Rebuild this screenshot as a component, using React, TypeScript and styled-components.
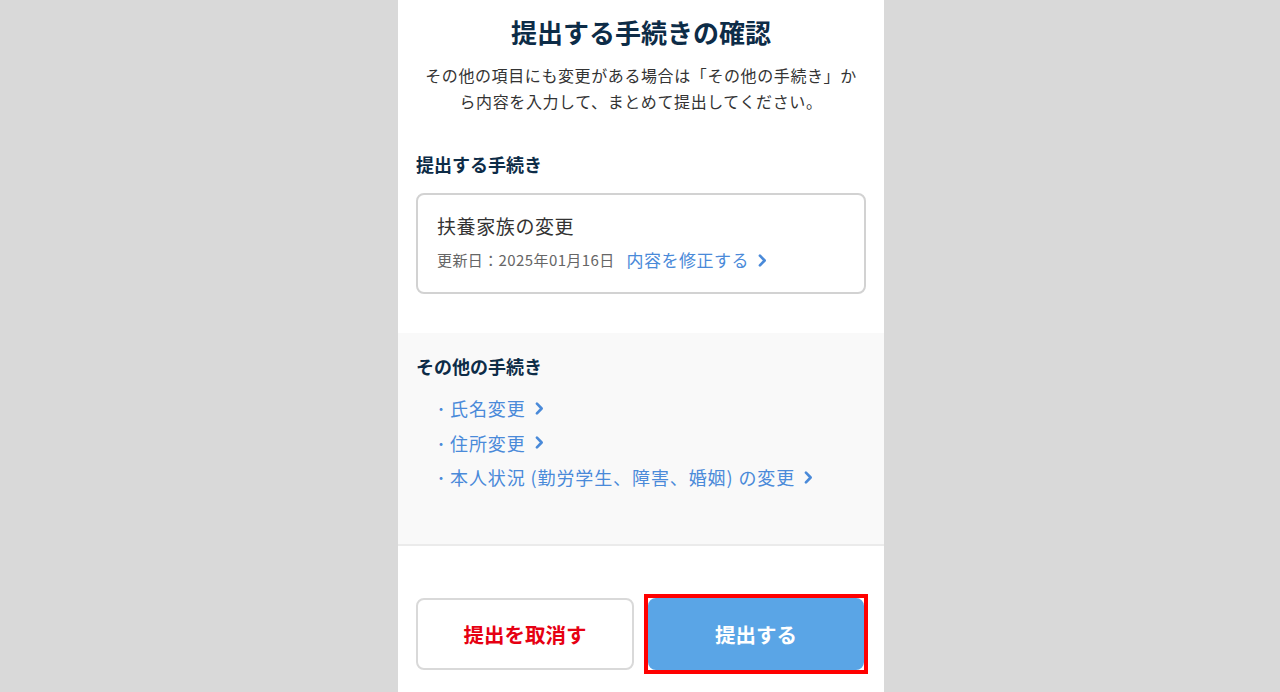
import React from "react";
import styled, { createGlobalStyle } from "styled-components";

const Global = createGlobalStyle`
  html, body { margin: 0; padding: 0; background: #d9d9d9; }
  body { font-family: "Noto Sans CJK JP", "Noto Sans", sans-serif; }
  * { box-sizing: border-box; }
`;

const Panel = styled.div`
  width: 486px;
  margin: 0 0 0 calc(50% - 242px);
  min-height: 100vh;
  background: #fff;
  display: flex;
  flex-direction: column;
`;

const TopSection = styled.section`
  padding: 13px 18px 39px;
  display: flex;
  flex-direction: column;
`;

const Title = styled.h1`
  margin: 0;
  font-size: 26px;
  line-height: 38px;
  font-weight: 700;
  color: #0d2c47;
  text-align: center;
`;

const Lead = styled.p`
  margin: 11px 0 0;
  font-size: 16px;
  line-height: 26px;
  color: #333;
  text-align: center;
  letter-spacing: 0.6px;
`;

const Heading = styled.h2<{ $top: number }>`
  margin: ${(p) => p.$top}px 0 0;
  font-size: 18px;
  line-height: 24px;
  font-weight: 700;
  color: #0d2c47;
`;

const Card = styled.div`
  margin-top: 17px;
  border: 2px solid #d2d2d2;
  border-radius: 8px;
  padding: 17px 19px 20px;
  display: flex;
  flex-direction: column;
  gap: 8px;
`;

const CardTitle = styled.div`
  font-size: 19px;
  line-height: 28px;
  color: #333;
  letter-spacing: 0.6px;
`;

const Meta = styled.div`
  display: flex;
  align-items: center;
  gap: 12px;
  font-size: 15px;
  line-height: 24px;
  color: #666;
  letter-spacing: 0.4px;
`;

const Link = styled.a<{ $size: number; $spacing: number }>`
  display: inline-flex;
  align-items: center;
  gap: 9px;
  color: #4a8ad9;
  font-size: ${(p) => p.$size}px;
  letter-spacing: ${(p) => p.$spacing}px;
  text-decoration: none;
  cursor: pointer;
`;

const OtherSection = styled.section`
  background: #f9f9f9;
  padding: 21px 18px 49px;
  border-bottom: 2px solid #ebebeb;
`;

const List = styled.ul`
  list-style: none;
  margin: 13px 0 0;
  padding: 0 0 0 16px;
  display: flex;
  flex-direction: column;
`;

const Item = styled.li`
  display: flex;
  align-items: center;
  height: 34.5px;
  color: #4a8ad9;
`;

const Bullet = styled.span`
  width: 18px;
  font-size: 14px;
  color: #4a8ad9;
  display: inline-flex;
  justify-content: center;
`;

const Footer = styled.footer`
  padding: 52px 18px 20px;
  display: grid;
  grid-template-columns: 218px 216px;
  gap: 14px;
`;

const Button = styled.button<{ $primary?: boolean }>`
  position: relative;
  height: 72px;
  border-radius: 8px;
  font-family: inherit;
  font-size: 20.5px;
  font-weight: 700;
  cursor: pointer;
  border: 2px solid ${(p) => (p.$primary ? "#5aa5e6" : "#d9d9d9")};
  background: ${(p) => (p.$primary ? "#5aa5e6" : "#fff")};
  color: ${(p) => (p.$primary ? "#fff" : "#e60012")};
  outline: none;
`;

const Highlight = styled.span`
  position: absolute;
  inset: -6px;
  border: 4px solid #ff0000;
  pointer-events: none;
`;

const Chevron = ({ size = 14 }: { size?: number }) => (
  <svg width={size * 0.6} height={size} viewBox="0 0 8 14" fill="none">
    <path d="M1.6 2.5 L6 7 L1.6 11.5" stroke="#4a8ad9" strokeWidth="2.5" strokeLinecap="round" strokeLinejoin="round" />
  </svg>
);

const others = ["氏名変更", "住所変更", "本人状況 (勤労学生、障害、婚姻) の変更"];

export default function App() {
  return (
    <>
      <Global />
      <Panel>
        <TopSection>
          <Title>提出する手続きの確認</Title>
          <Lead>
            その他の項目にも変更がある場合は「その他の手続き」か
            <br />
            ら内容を入力して、まとめて提出してください。
          </Lead>
          <Heading $top={38}>提出する手続き</Heading>
          <Card>
            <CardTitle>扶養家族の変更</CardTitle>
            <Meta>
              <span>更新日：2025年01月16日</span>
              <Link $size={17} $spacing={0.5}>
                内容を修正する
                <Chevron size={15} />
              </Link>
            </Meta>
          </Card>
        </TopSection>
        <OtherSection>
          <Heading $top={0}>その他の手続き</Heading>
          <List>
            {others.map((o) => (
              <Item key={o}>
                <Bullet>・</Bullet>
                <Link $size={18} $spacing={0.9}>
                  {o}
                  <Chevron size={15} />
                </Link>
              </Item>
            ))}
          </List>
        </OtherSection>
        <Footer>
          <Button>提出を取消す</Button>
          <Button $primary>
            提出する
            <Highlight />
          </Button>
        </Footer>
      </Panel>
    </>
  );
}
